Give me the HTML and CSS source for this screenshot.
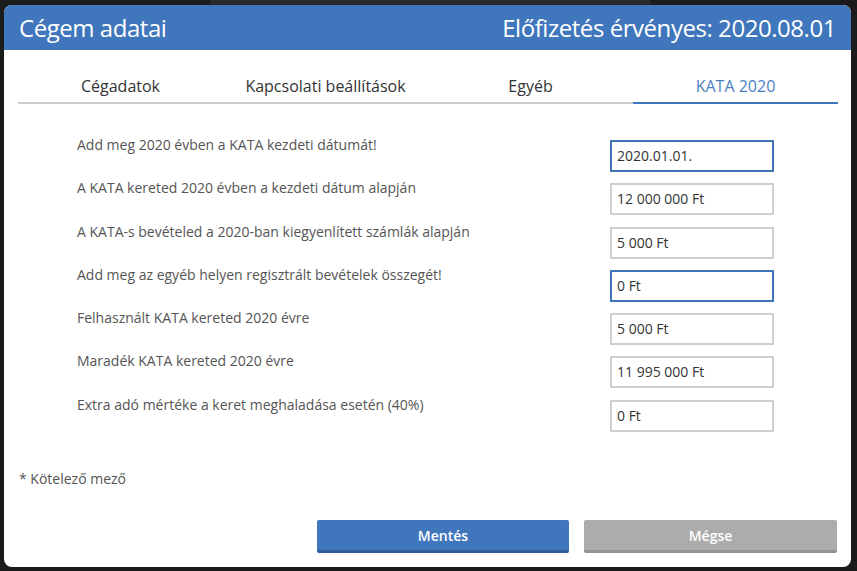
FILE: index.html
```html
<!DOCTYPE html>
<html lang="hu">
<head>
  <meta charset="UTF-8">
  <title>Cégem adatai</title>
  <link rel="stylesheet" href="styles.css">
</head>
<body>

  <div class="backdrop-strip"></div>

  <!-- Cégem adatai ablak -->
  <div class="dialog">
    <div class="dialog-header">
      <span class="dialog-title">Cégem adatai</span>
      <span class="dialog-title">Előfizetés érvényes: 2020.08.01</span>
    </div>

    <div class="dialog-body">
      <div class="tabs">
        <div class="tab">Cégadatok</div>
        <div class="tab">Kapcsolati beállítások</div>
        <div class="tab">Egyéb</div>
        <div class="tab active">KATA 2020</div>
      </div>

      <div class="form">
        <div class="form-row">
          <label>Add meg 2020 évben a KATA kezdeti dátumát!</label>
          <div class="field focus">2020.01.01.</div>
        </div>
        <div class="form-row">
          <label>A KATA kereted 2020 évben a kezdeti dátum alapján</label>
          <div class="field">12 000 000 Ft</div>
        </div>
        <div class="form-row">
          <label>A KATA-s bevételed a 2020-ban kiegyenlített számlák alapján</label>
          <div class="field">5 000 Ft</div>
        </div>
        <div class="form-row">
          <label>Add meg az egyéb helyen regisztrált bevételek összegét!</label>
          <div class="field focus">0 Ft</div>
        </div>
        <div class="form-row">
          <label>Felhasznált KATA kereted 2020 évre</label>
          <div class="field">5 000 Ft</div>
        </div>
        <div class="form-row">
          <label>Maradék KATA kereted 2020 évre</label>
          <div class="field">11 995 000 Ft</div>
        </div>
        <div class="form-row">
          <label>Extra adó mértéke a keret meghaladása esetén (40%)</label>
          <div class="field">0 Ft</div>
        </div>
      </div>

      <div class="required-note">* Kötelező mező</div>
    </div>

    <div class="dialog-footer">
      <button class="btn btn-save">Mentés</button>
      <button class="btn btn-cancel">Mégse</button>
    </div>
  </div>

</body>
</html>
```

FILE: styles.css
```css
body {
  font-family: "Open Sans", "Noto Sans", sans-serif;
  margin: 0;
  padding: 0;
  background: #1b1b1b;
  height: 571px;
  overflow: hidden;
  position: relative;
}

.backdrop-strip {
  position: absolute;
  top: 0;
  left: 210px;
  width: 440px;
  height: 6px;
  background: #2a2a2a;
}

.dialog {
  position: relative;
  margin: 5px 6px 0 4px;
  height: 562px;
  background: white;
  border-radius: 8px;
  display: flex;
  flex-direction: column;
  overflow: hidden;
}

.dialog-header {
  height: 45px;
  background: #3f76bc;
  color: white;
  display: flex;
  align-items: center;
  justify-content: space-between;
  padding: 0 15px 0 15px;
}

.dialog-title {
  font-size: 24px;
  letter-spacing: -0.45px;
}

.dialog-body {
  flex: 1;
  padding: 0 13px 0 14px;
}

.tabs {
  display: flex;
  margin-top: 25px;
}

.tab {
  flex: 1;
  text-align: center;
  font-size: 16px;
  line-height: 22px;
  color: #333;
  padding-bottom: 5px;
  border-bottom: 2px solid #cccccc;
}

.tab.active {
  color: #4a7fc1;
  border-bottom-color: #3f76bc;
}

.form {
  margin-top: 32px;
  display: flex;
  flex-direction: column;
  gap: 7.3px;
}

.form-row {
  display: flex;
  align-items: flex-start;
  padding-left: 59px;
}

.form-row label {
  width: 533px;
  font-size: 14px;
  line-height: 18px;
  color: #555;
}

.field {
  margin-top: 4px;
  width: 164px;
  height: 32px;
  box-sizing: border-box;
  border: 2px solid #cfcfcf;
  padding: 0 5px;
  font-size: 14px;
  line-height: 28px;
  color: #333;
}

.field.focus {
  border-color: #3f76bc;
}

.required-note {
  margin-top: 38px;
  font-size: 14px;
  line-height: 18px;
  color: #555;
  padding-left: 1px;
}

.dialog-footer {
  display: flex;
  justify-content: flex-end;
  gap: 15px;
  padding: 0 14px 14px 0;
}

.btn {
  width: 252px;
  height: 33px;
  border: none;
  border-radius: 2px;
  color: white;
  font-family: "Open Sans", sans-serif;
  font-size: 14px;
  font-weight: 600;
  cursor: pointer;
}

.btn-save {
  background: #3f76bc;
  border-bottom: 3px solid #305e9c;
}

.btn-cancel {
  width: 253px;
  background: #acacac;
  border-bottom: 3px solid #949494;
}
```
